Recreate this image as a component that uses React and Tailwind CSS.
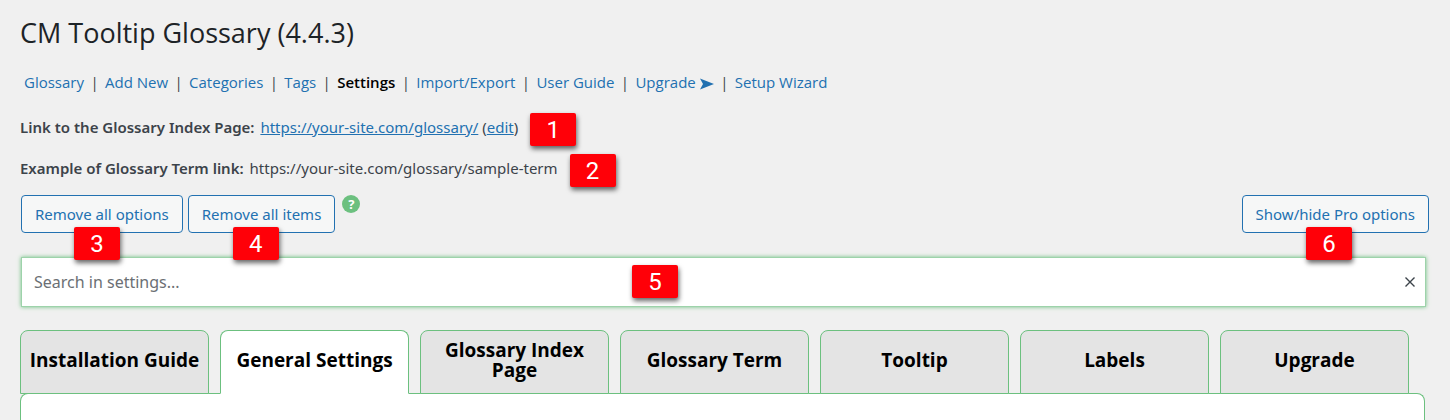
import React, { useState } from 'react';
import clsx from 'clsx';

const NAV_LINKS = [
  { label: 'Glossary' },
  { label: 'Add New' },
  { label: 'Categories' },
  { label: 'Tags' },
  { label: 'Settings', current: true },
  { label: 'Import/Export' },
  { label: 'User Guide' },
  { label: 'Upgrade', arrow: true },
  { label: 'Setup Wizard' },
];

const TABS = [
  'Installation Guide',
  'General Settings',
  'Glossary Index Page',
  'Glossary Term',
  'Tooltip',
  'Labels',
  'Upgrade',
];

// Red numbered callout, always laid over the element it points at
function Marker({ number, className }) {
  return (
    <span
      className={clsx(
        'absolute z-10 flex h-[33px] w-[46px] items-center justify-center rounded-xs bg-[#ff0008] font-[Roboto,sans-serif] text-2xl text-white shadow-[1px_3px_5px_rgba(0,0,0,0.6)]',
        className
      )}
    >
      {number}
    </span>
  );
}

function ActionButton({ children }) {
  return (
    <button
      type="button"
      className="h-[38px] rounded border border-[#2271b1] bg-[#f6f7f7] px-[13px] text-[15px] whitespace-nowrap text-[#2271b1]"
    >
      {children}
    </button>
  );
}

function ArrowIcon() {
  return (
    <svg viewBox="0 0 14 12" className="ml-1 inline-block h-3 w-3.5 fill-current" aria-hidden="true">
      <path d="M0 0.5 14 6 0 11.5 3 6Z" />
    </svg>
  );
}

function PluginNav() {
  return (
    <nav className='ml-1 font-["Open_Sans",sans-serif] text-[15px] leading-5'>
      <ul className="flex flex-wrap">
        {NAV_LINKS.map((link, i) => (
          <li key={link.label} className="flex">
            {i > 0 && <span className="w-[21px] text-center">|</span>}
            <a
              href="#"
              aria-current={link.current ? 'page' : undefined}
              className={link.current ? 'font-semibold text-black' : 'text-[#2271b1]'}
            >
              {link.label}
              {link.arrow && <ArrowIcon />}
            </a>
          </li>
        ))}
      </ul>
    </nav>
  );
}

export default function App() {
  const [activeTab, setActiveTab] = useState('General Settings');
  const [query, setQuery] = useState('');

  return (
    <div className='min-h-screen bg-[#f0f0f0] pt-[17px] pl-5 font-["Noto_Sans","Open_Sans",sans-serif] text-[15px] text-[#3c434a]'>
      <h1 className='mb-[23px] font-["Open_Sans",sans-serif] text-[27px] leading-8 text-[#1d2327]'>
        CM Tooltip Glossary (4.4.3)
      </h1>

      <PluginNav />

      <div className="mt-[25px] flex flex-col items-start gap-[21px] leading-5">
        <p className="relative">
          <strong className="mr-0.5 font-semibold">Link to the Glossary Index Page:</strong>{' '}
          <a href="#" className="text-[#2271b1] underline">https://your-site.com/glossary/</a>{' '}
          (<a href="#" className="text-[#2271b1] underline">edit</a>)
          <Marker number={1} className="-top-1 left-full ml-3" />
        </p>
        <p className="relative">
          <strong className="mr-0.5 font-semibold">Example of Glossary Term link:</strong>{' '}
          https://your-site.com/glossary/sample-term
          <Marker number={2} className="-top-1 left-full ml-3" />
        </p>
      </div>

      <div className="mt-[17px] mr-[21px] ml-px flex items-start justify-between">
        <div className="flex items-start gap-[5px]">
          <div className="relative">
            <ActionButton>Remove all options</ActionButton>
            <Marker number={3} className="top-8 left-[53px]" />
          </div>
          <div className="relative">
            <ActionButton>Remove all items</ActionButton>
            <Marker number={4} className="top-8 left-[45px]" />
          </div>
          <button
            type="button"
            aria-label="Help"
            className="ml-0.5 flex size-[18px] items-center justify-center rounded-full bg-[#6cc07f] text-[13px] leading-none font-bold text-white"
          >
            ?
          </button>
        </div>
        <div className="relative">
          <ActionButton>Show/hide Pro options</ActionButton>
          <Marker number={6} className="top-8 right-[77px]" />
        </div>
      </div>

      <div className="mt-6 mr-6 ml-px">
        <div className="relative flex h-[50px] items-center border border-[#9dd3aa] bg-white shadow-[0_0_4px_#6cc07f]">
          <input
            type="text"
            aria-label="Search in settings"
            placeholder="Search in settings..."
            value={query}
            onChange={(e) => setQuery(e.target.value)}
            className="h-full flex-1 px-3 text-base outline-none placeholder:text-[#6b6f74]"
          />
          <button type="button" aria-label="Clear search" onClick={() => setQuery('')} className="px-2.5">
            <svg viewBox="0 0 10 10" className="size-2.5 stroke-current stroke-[1.4]" aria-hidden="true">
              <path d="M0.5 0.5 9.5 9.5M9.5 0.5 0.5 9.5" />
            </svg>
          </button>
          <Marker number={5} className="top-[7px] left-[610px]" />
        </div>
      </div>

      <div className='mt-[23px] mr-[25px] font-["Open_Sans",sans-serif]'>
        <div role="tablist" className="relative z-[1] -mb-px flex gap-[11px]">
          {TABS.map((tab) => (
            <button
              key={tab}
              type="button"
              role="tab"
              aria-selected={tab === activeTab}
              onClick={() => setActiveTab(tab)}
              className={clsx(
                'h-16 w-[189px] rounded-t-lg border border-[#6cc07f] px-2 pb-1 text-[19px] leading-5 font-bold text-black',
                tab === activeTab ? 'border-b-white bg-white' : 'bg-[#e4e4e4]'
              )}
            >
              {tab}
            </button>
          ))}
        </div>
        <div role="tabpanel" className="h-[27px] rounded-t-lg border border-b-0 border-[#6cc07f] bg-white" />
      </div>
    </div>
  );
}
